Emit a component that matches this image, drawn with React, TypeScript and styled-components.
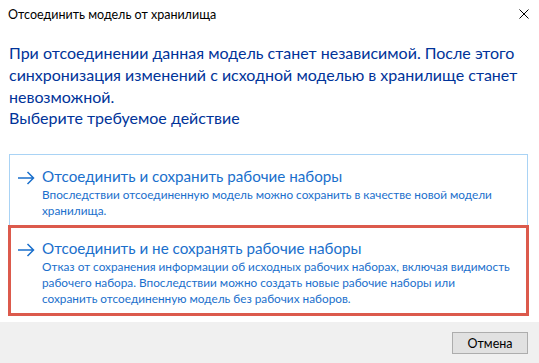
import styled, { createGlobalStyle } from 'styled-components';

const GlobalStyle = createGlobalStyle`
    html, body {
        margin: 0;
        padding: 0;
        background: #ffffff;
    }
    body {
        font-family: Lato, 'Noto Sans', sans-serif;
    }
`;

const Dialog = styled.div`
    width: 539px;
    height: 363px;
    display: flex;
    flex-direction: column;
    background: #ffffff;
    overflow: hidden;
`;

const TitleBar = styled.div`
    flex-shrink: 0;
    height: 28px;
    display: flex;
    align-items: center;
    justify-content: space-between;
    padding: 0 10px 0 8px;
    font-size: 12.5px;
    color: #000000;
`;

const CloseButton = styled.div`
    width: 10px;
    height: 10px;
    display: flex;
    margin-top: -1px;
`;

const Body = styled.div`
    flex: 1;
    min-height: 0;
    padding: 14px 11px 0 9px;
    white-space: nowrap;
`;

const Instruction = styled.p<{ lineHeight: number }>`
    margin: 0;
    font-size: 16px;
    line-height: ${({ lineHeight }) => lineHeight}px;
    color: #003399;
`;

const Card = styled.div`
    margin-top: 26px;
    border: 1px solid #a9d3f5;
    border-bottom-color: #e6e6e6;
`;

const Option = styled.div<{ highlighted?: boolean }>`
    display: grid;
    grid-template-columns: 25px 1fr;
    padding: 11px 8px 7.5px 7px;
    color: #1a6fcc;
    outline: ${({ highlighted }) =>
        highlighted ? '3px solid #dc5a4c' : 'none'};
    outline-offset: -1px;
`;

const ArrowCell = styled.div`
    padding-top: 3px;
`;

const OptionTitle = styled.div`
    font-size: 15.2px;
    line-height: 20px;
`;

const OptionText = styled.div`
    font-size: 11.8px;
    line-height: 16px;
    margin-top: 1px;
`;

const Footer = styled.div`
    flex-shrink: 0;
    height: 41px;
    background: #f0f0f0;
    display: flex;
    justify-content: flex-end;
    align-items: flex-start;
    padding: 10px 11px 0 0;
    box-sizing: border-box;
`;

const Button = styled.button`
    width: 76px;
    height: 22px;
    border: 1px solid #adadad;
    background: #e1e1e1;
    font-family: Lato, 'Noto Sans', sans-serif;
    font-size: 12.5px;
    color: #000000;
    padding: 0;
`;

const Arrow = () => (
    <svg width='18' height='14' viewBox='0 0 18 14'>
        <path
            d='M1 7 H16.5 M10.5 1 L16.5 7 L10.5 13'
            fill='none'
            stroke='#1a6fcc'
            strokeWidth='1.5'
        />
    </svg>
);

const options = [
    {
        title: 'Отсоединить и сохранить рабочие наборы',
        lines: [
            'Впоследствии отсоединенную модель можно сохранить в качестве новой модели',
            'хранилища.',
        ],
    },
    {
        title: 'Отсоединить и не сохранять рабочие наборы',
        lines: [
            'Отказ от сохранения информации об исходных рабочих наборах, включая видимость',
            'рабочего набора. Впоследствии можно создать новые рабочие наборы или',
            'сохранить отсоединенную модель без рабочих наборов.',
        ],
        highlighted: true,
    },
];

export default function App() {
    return (
        <Dialog>
            <GlobalStyle />
            <TitleBar>
                <span>Отсоединить модель от хранилища</span>
                <CloseButton>
                    <svg width='10' height='10' viewBox='0 0 10 10'>
                        <path
                            d='M0.5 0.5 L9.5 9.5 M9.5 0.5 L0.5 9.5'
                            stroke='#000'
                            strokeWidth='1'
                        />
                    </svg>
                </CloseButton>
            </TitleBar>
            <Body>
                <Instruction lineHeight={22}>
                    При отсоединении данная модель станет независимой. После этого
                    <br />
                    синхронизация изменений с исходной моделью в хранилище станет
                    <br />
                    невозможной.
                </Instruction>
                <Instruction lineHeight={20}>Выберите требуемое действие</Instruction>
                <Card>
                    {options.map((opt) => (
                        <Option key={opt.title} highlighted={opt.highlighted}>
                            <ArrowCell>
                                <Arrow />
                            </ArrowCell>
                            <div>
                                <OptionTitle>{opt.title}</OptionTitle>
                                <OptionText>
                                    {opt.lines.map((l, i) => (
                                        <div key={i}>{l}</div>
                                    ))}
                                </OptionText>
                            </div>
                        </Option>
                    ))}
                </Card>
            </Body>
            <Footer>
                <Button>Отмена</Button>
            </Footer>
        </Dialog>
    );
}
